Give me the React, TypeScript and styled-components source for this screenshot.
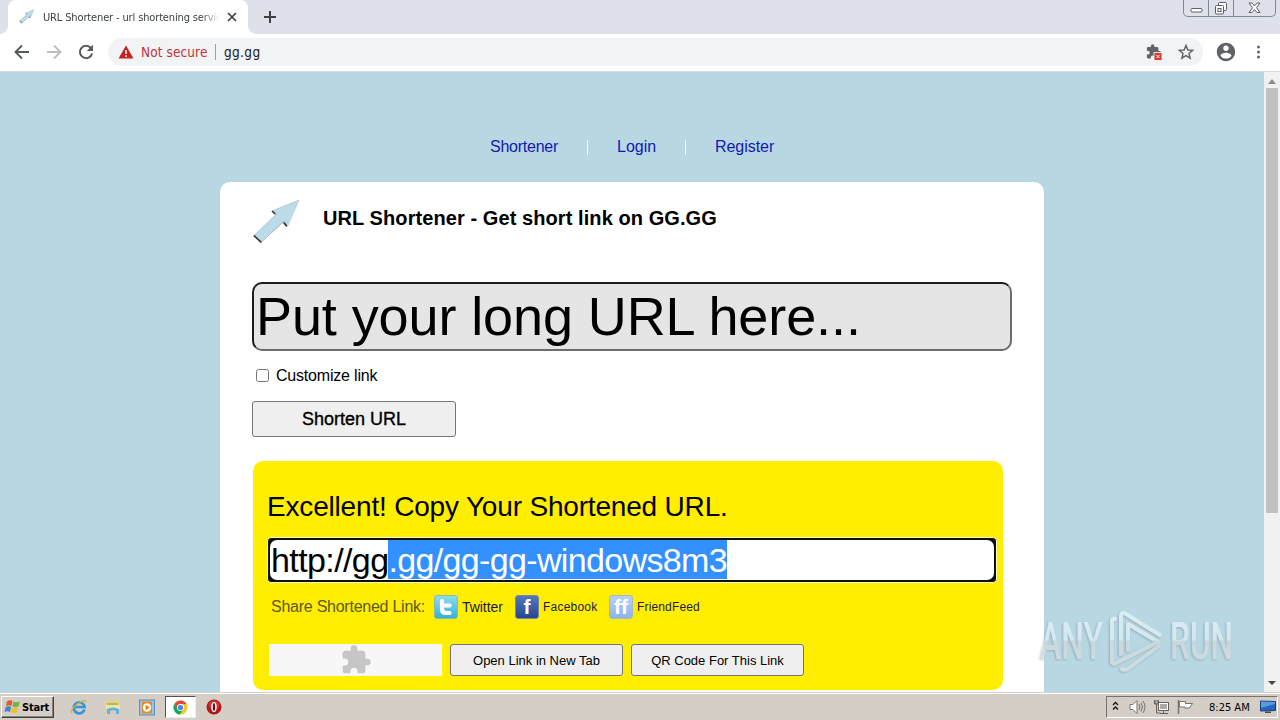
import React from "react";
import styled, { createGlobalStyle } from "styled-components";

const ui = `"DejaVu Sans Condensed", "DejaVu Sans", sans-serif`;

const GlobalStyle = createGlobalStyle`
  * { box-sizing: border-box; }
  body { margin: 0; overflow: hidden; font-family: "Liberation Sans", Arial, sans-serif; color: #000; }
  svg { display: block; flex: none; }
`;

const Screen = styled.div`
  position: relative;
  width: 1280px;
  height: 720px;
  display: flex;
  flex-direction: column;
  overflow: hidden;
  background: #b7d7e3;
`;

const Label = styled.span<{ $size: number; $track?: number; $weight?: number; $color?: string; $ui?: boolean }>`
  font-size: ${(p) => p.$size}px;
  letter-spacing: ${(p) => p.$track ?? 0}px;
  font-weight: ${(p) => p.$weight ?? 400};
  color: ${(p) => p.$color ?? "#000"};
  white-space: nowrap;
  ${(p) => (p.$ui ? `font-family: ${ui};` : "")}
`;

/* Browser chrome */
const TabStrip = styled.header`
  height: 34px;
  display: flex;
  align-items: flex-start;
  background: #dee1e9;
  padding-left: 8px;
  flex: none;
`;
const Tab = styled.div`
  position: relative;
  width: 240px;
  height: 34px;
  padding: 0 9px 0 11px;
  display: flex;
  align-items: center;
  background: #fff;
  border-radius: 8px 8px 0 0;
  &::before, &::after {
    content: "";
    position: absolute;
    bottom: 0;
    width: 8px;
    height: 8px;
  }
  &::before { left: -8px; background: radial-gradient(circle at 0 0, transparent 7.5px, #fff 8px); }
  &::after { right: -8px; background: radial-gradient(circle at 100% 0, transparent 7.5px, #fff 8px); }
`;
const TabTitle = styled.div`
  width: 177px;
  margin-left: 8px;
  margin-right: 6px;
  overflow: hidden;
  line-height: 16px;
  padding-top: 1px;
  display: flex;
  mask-image: linear-gradient(90deg, #000 158px, transparent 177px);
`;
const NewTab = styled.div`
  margin: 11px 0 0 16px;
`;
const WindowButtons = styled.div`
  margin-left: auto;
  margin-right: 4px;
  height: 17px;
  display: flex;
  border: 1px solid #84888f;
  border-top: 0;
  border-radius: 0 0 5px 5px;
`;
const WindowButton = styled.div<{ $w: number }>`
  width: ${(p) => p.$w}px;
  display: flex;
  align-items: center;
  justify-content: center;
  & + & { border-left: 1px solid #84888f; }
`;
const Toolbar = styled.div`
  height: 38px;
  flex: none;
  display: flex;
  align-items: center;
  background: #fff;
  border-bottom: 1px solid #d5dade;
  padding: 0 12px 1px;
  gap: 12px;
`;
const NavIcons = styled.div`
  display: flex;
  gap: 12px;
  width: 84px;
`;
const AddressBar = styled.div`
  width: 1095px;
  height: 28px;
  border-radius: 14px;
  background: #f1f3f4;
  display: flex;
  align-items: center;
  padding: 0 8px 0 10px;
`;
const Security = styled.div`
  width: 97px;
  display: flex;
  align-items: center;
  gap: 7px;
`;
const AddressDivider = styled.i`
  width: 1px;
  height: 16px;
  margin-right: 8px;
  background: #9aa0a6;
`;
const AddressActions = styled.div`
  margin-left: auto;
  display: flex;
  align-items: center;
  gap: 14px;
`;
const ProfileActions = styled.div`
  display: flex;
  align-items: center;
  gap: 14px;
`;

/* Page */
const Viewport = styled.main`
  height: 620px;
  flex: none;
  display: flex;
  overflow: hidden;
`;
const Page = styled.div`
  width: 1264px;
  height: 620px;
  overflow: hidden;
`;
const Menu = styled.nav`
  height: 110px;
  padding: 65px 0 0 490px;
  display: flex;
  align-items: flex-start;
  line-height: 20px;
`;
const MenuLink = styled.a<{ $w: number; $track: number }>`
  width: ${(p) => p.$w}px;
  color: #1418b4;
  font-size: 16px;
  letter-spacing: ${(p) => p.$track}px;
`;
const MenuDivider = styled.i`
  width: 1px;
  height: 15px;
  margin: 3px 29px 0 29px;
  background: #f2fafc;
`;
const Card = styled.section`
  width: 824px;
  height: 560px;
  margin-left: 220px;
  padding: 0 32px;
  border-radius: 10px 10px 0 0;
  background: #fff;
`;
const CardHeader = styled.div`
  height: 100px;
  padding-top: 16px;
  display: flex;
`;
const CardTitle = styled.h1`
  margin: 8px 0 0 21px;
  font-size: 20px;
  line-height: 24px;
  letter-spacing: 0.08px;
  white-space: nowrap;
`;
const LongUrl = styled.div`
  width: 760px;
  height: 69px;
  border: 2px solid;
  border-color: #1c1c1c #6d6d6d #6d6d6d #1c1c1c;
  border-radius: 10px;
  background: #e5e5e5;
  padding: 0 0 2px 2px;
  display: flex;
  align-items: center;
`;
const CheckRow = styled.label`
  height: 50px;
  padding: 0 0 0 4px;
  display: flex;
  align-items: center;
  gap: 7px;
`;
const Box = styled.i`
  width: 13px;
  height: 13px;
  margin-bottom: 2px;
  border: 1px solid #767676;
  border-radius: 2.5px;
  background: #fff;
`;
const Button = styled.button<{ $w: number; $h: number }>`
  width: ${(p) => p.$w}px;
  height: ${(p) => p.$h}px;
  border: 1px solid #767676;
  border-radius: 3px;
  background: #efefef;
  padding: 0;
  display: flex;
  align-items: center;
  justify-content: center;
  font-family: inherit;
`;
const SubmitText = styled(Label)`
  -webkit-text-stroke: 0.35px #000;
`;
const Result = styled.div`
  width: 750px;
  height: 229px;
  margin: 24px 0 0 1px;
  padding: 29px 0 0 14px;
  border-radius: 10px;
  background: #ffee00;
`;
const ResultTitle = styled.div`
  height: 47px;
  line-height: 33px;
`;
const ShortUrl = styled.div`
  width: 730px;
  height: 46px;
  border: 1px solid #f8f8c6;
  border-radius: 4px;
  background: #101010;
  padding: 2px;
`;
const ShortUrlField = styled.div`
  height: 100%;
  border-radius: 7px;
  background: #fff;
  padding-left: 1px;
  line-height: 40px;
  display: flex;
`;
const Selected = styled.span`
  height: 39px;
  background: #3390ff;
  line-height: 40px;
`;
const ShareRow = styled.div`
  height: 24px;
  margin: 12px 0 25px;
  padding-left: 4px;
  display: flex;
  align-items: center;
`;
const ShareLink = styled.span<{ $w: number }>`
  width: ${(p) => p.$w}px;
  display: flex;
  align-items: center;
  gap: 4px;
`;
const Badge = styled.i<{ $from: string; $to: string; $edge: string }>`
  width: 24px;
  height: 24px;
  flex: none;
  border: 1px solid ${(p) => p.$edge};
  border-radius: 3px;
  background: linear-gradient(${(p) => p.$from}, ${(p) => p.$to});
  display: flex;
  align-items: center;
  justify-content: center;
  color: #fff;
  font: bold 21px/22px "Liberation Sans", sans-serif;
`;
const Actions = styled.div`
  display: flex;
  gap: 8px;
  padding-left: 2px;
`;
const Plugin = styled.div`
  width: 173px;
  height: 32px;
  background: #f7f7f7;
  display: flex;
  justify-content: center;
`;
const ScrollTrack = styled.div`
  width: 16px;
  height: 620px;
  background: #f1f1f1;
  display: flex;
  flex-direction: column;
  align-items: center;
  padding: 7px 0;
  justify-content: space-between;
`;
const Thumb = styled.div`
  width: 12px;
  height: 425px;
  margin: 4px 0 auto;
  background: #c1c1c1;
`;
const Triangle = styled.i<{ $down?: boolean }>`
  border: 4px solid transparent;
  ${(p) => (p.$down ? "border-top: 4px solid #444; border-bottom: 0;" : "border-bottom: 5px solid #8d8d8d; border-top: 0;")}
`;

/* Taskbar */
const Taskbar = styled.footer`
  height: 28px;
  flex: none;
  display: flex;
  align-items: center;
  background: #d5cec6;
  border-top: 1px solid #d5d0c8;
  box-shadow: inset 0 1px #fff;
  padding: 1px 2px 0 1px;
`;
const Start = styled.div`
  width: 53px;
  height: 22px;
  padding-left: 2px;
  display: flex;
  align-items: center;
  gap: 1px;
  border: 1px solid;
  border-color: #fff #404040 #404040 #fff;
  box-shadow: inset -1px -1px #88847c;
`;
const Launchers = styled.div`
  display: flex;
  align-items: center;
  margin-left: 8px;
`;
const Launcher = styled.div<{ $active?: boolean }>`
  width: 34px;
  height: 22px;
  display: flex;
  align-items: center;
  justify-content: center;
  ${(p) =>
    p.$active
      ? `width: 31px; margin: 0 1px 0 1px; background: #fff; border: 1px solid; border-color: #55524c #eee #eee #55524c;`
      : ""}
`;
const Tray = styled.div`
  width: 172px;
  height: 22px;
  margin-left: auto;
  padding-left: 5px;
  display: flex;
  align-items: center;
  border: 1px solid;
  border-color: #77736c #fff #fff #77736c;
`;
const TraySlot = styled.div<{ $w: number }>`
  width: ${(p) => p.$w}px;
  display: flex;
`;

const Watermark = styled.svg`
  position: absolute;
  left: 1030px;
  top: 600px;
`;

const PUZZLE =
  "M20.5 11H19V7c0-1.100-.900-2-2-2h-4V3.500a2.500 2.500 0 0 0-5 0V5H4c-1.100 0-2 .900-2 2v3.800h1.500a2.700 2.700 0 0 1 0 5.400H2V20c0 1.100.900 2 2 2h3.800v-1.500a2.700 2.700 0 0 1 5.400 0V22H17c1.100 0 2-.900 2-2v-4h1.500a2.500 2.500 0 0 0 0-5z";

const ArrowLogo = ({ size }: { size: number }) => (
  <svg width={size} height={size} viewBox="0 0 50 50">
    <path d="M46.500 2.500 L20 13 L23.500 17 L1.500 38 L9 44.800 L30.500 25 L34.500 28.500 Z" fill="#3f484c" opacity=".6" />
    <path d="M47 2 L21 12.500 L24.500 16 L2.500 37 L10 43.500 L32 23 L36 27.500 Z" fill="#bcdbe8" stroke="#b0c4cc" strokeWidth=".6" />
    <path d="M1.800 37.500 L9.300 44.500 M20 13 L23 16 M32 25 L35 28.500" stroke="#343a3e" strokeWidth="1.600" />
  </svg>
);

const Chrome = () => (
  <svg width="15" height="15" viewBox="0 0 16 16">
    <circle cx="8" cy="8" r="7.500" fill="#f8c81c" />
    <path d="M1.500 4.250 A7.500 7.500 0 0 1 14.500 4.250 L8 4.500 L5 10 Z" fill="#dd4b39" />
    <path d="M1.500 4.250 L5 10 L8 11.400 L10.500 10.500 L7.500 15.500 A7.500 7.500 0 0 1 1.500 4.250" fill="#1da362" />
    <circle cx="8" cy="8" r="3.700" fill="#fff" />
    <circle cx="8" cy="8" r="2.800" fill="#4285f4" />
  </svg>
);

export default function App() {
  return (
    <Screen>
      <GlobalStyle />
      <TabStrip>
        <Tab>
          <ArrowLogo size={16} />
          <TabTitle>
            <Label $ui $size={11} $color="#3c4043" $track={-0.14}>URL Shortener - url shortening servic</Label>
          </TabTitle>
          <svg width="12" height="12" viewBox="0 0 12 12"><path d="M2 2l8 8M10 2l-8 8" stroke="#3c4043" strokeWidth="1.700" /></svg>
        </Tab>
        <NewTab>
          <svg width="12" height="12" viewBox="0 0 12 12"><path d="M6 0v12M0 6h12" stroke="#3c4043" strokeWidth="2" /></svg>
        </NewTab>
        <WindowButtons>
          <WindowButton $w={24}>
            <svg width="13" height="17" viewBox="0 0 13 17"><rect x="1" y="8.500" width="11" height="3.500" rx="1" fill="#fff" stroke="#5b6068" /></svg>
          </WindowButton>
          <WindowButton $w={25}>
            <svg width="14" height="17" viewBox="0 0 14 17" fill="#f7f8fa" stroke="#5b6068"><rect x="4.500" y="2.500" width="8" height="8" rx="1" /><rect x="1.500" y="5.500" width="8" height="8.500" rx="1" /><rect x="4" y="8.500" width="3" height="3" /></svg>
          </WindowButton>
          <WindowButton $w={42}>
            <svg width="13" height="17" viewBox="0 0 13 17"><path d="M1 3h3l2.500 3L9 3h3L8.500 7.750 12 12.500H9l-2.500-3-2.500 3H1l3.500-4.750z" fill="#fff" stroke="#5b6068" /></svg>
          </WindowButton>
        </WindowButtons>
      </TabStrip>

      <Toolbar>
        <NavIcons>
          <svg width="20" height="20" viewBox="0 0 20 20"><path d="M17 10H4M10 3.500L3.500 10l6.500 6.500" fill="none" stroke="#56595d" strokeWidth="1.900" /></svg>
          <svg width="20" height="20" viewBox="0 0 20 20"><path d="M3 10h13M10 3.500l6.500 6.500-6.500 6.500" fill="none" stroke="#bcbec1" strokeWidth="1.900" /></svg>
          <svg width="20" height="20" viewBox="0 0 20 20"><path d="M14.900 6A6.200 6.200 0 1 0 16.100 11.500" fill="none" stroke="#56595d" strokeWidth="2" /><path d="M17 2.800V9h-6.200z" fill="#56595d" /></svg>
        </NavIcons>
        <AddressBar>
          <Security>
            <svg width="16" height="14" viewBox="0 0 16 14"><path d="M8 .5L15.500 13.500H.5z" fill="#c5221f" /><path d="M8 5v4M8 10.300v1.700" stroke="#fff" strokeWidth="1.500" /></svg>
            <Label $ui $size={13.5} $color="#c5303a" $track={0.1}>Not secure</Label>
          </Security>
          <AddressDivider />
          <Label $ui $size={13.5} $color="#202124" $track={0.35}>gg.gg</Label>
          <AddressActions>
            <svg width="18" height="18" viewBox="0 0 18 18"><g transform="translate(.5 .5) scale(.68)"><path d={PUZZLE} fill="#5f6368" /></g><rect x="9" y="9.500" width="8" height="8" fill="#d9372e" stroke="#fff" strokeWidth=".8" /><path d="M11.300 11.800l3.400 3.400M14.700 11.800l-3.400 3.400" stroke="#fff" /></svg>
            <svg width="18" height="18" viewBox="0 0 24 24"><path d="M12 3.300l2.500 6 6.400.5-4.900 4.200 1.500 6.300-5.500-3.400-5.500 3.400L8 14 3.100 9.800l6.400-.5z" fill="none" stroke="#5f6368" strokeWidth="1.900" /></svg>
          </AddressActions>
        </AddressBar>
        <ProfileActions>
          <svg width="22" height="22" viewBox="0 0 24 24"><path fill="#5f6368" d="M12 2C6.480 2 2 6.480 2 12s4.480 10 10 10 10-4.480 10-10S17.520 2 12 2zm0 3c1.660 0 3 1.340 3 3s-1.340 3-3 3-3-1.340-3-3 1.340-3 3-3zm0 14.200c-2.500 0-4.710-1.280-6-3.220.03-1.990 4-3.080 6-3.080s5.970 1.090 6 3.080c-1.290 1.940-3.500 3.220-6 3.220z" /></svg>
          <svg width="16" height="16" viewBox="0 0 16 16" fill="#5f6368"><circle cx="7.500" cy="3" r="1.500" /><circle cx="7.500" cy="8" r="1.500" /><circle cx="7.500" cy="13" r="1.500" /></svg>
        </ProfileActions>
      </Toolbar>

      <Viewport>
        <Page>
          <Menu>
            <MenuLink $w={68} $track={-0.25}>Shortener</MenuLink>
            <MenuDivider />
            <MenuLink $w={39} $track={0}>Login</MenuLink>
            <MenuDivider />
            <MenuLink $w={60} $track={-0.05}>Register</MenuLink>
          </Menu>
          <Card>
            <CardHeader>
              <ArrowLogo size={50} />
              <CardTitle>URL Shortener - Get short link on GG.GG</CardTitle>
            </CardHeader>
            <LongUrl><Label $size={54} $track={-0.1}>Put your long URL here...</Label></LongUrl>
            <CheckRow>
              <Box />
              <Label $size={16} $track={-0.2}>Customize link</Label>
            </CheckRow>
            <Button $w={204} $h={36}><SubmitText $size={18}>Shorten URL</SubmitText></Button>
            <Result>
              <ResultTitle><Label $size={28} $track={-0.18}>Excellent! Copy Your Shortened URL.</Label></ResultTitle>
              <ShortUrl>
                <ShortUrlField>
                  <Label $size={34} $track={-0.6}>http://gg</Label>
                  <Selected><Label $size={34} $color="#fff" $track={-0.65}>.gg/gg-gg-windows8m3</Label></Selected>
                </ShortUrlField>
              </ShortUrl>
              <ShareRow>
                <ShareLink $w={163}><Label $size={16} $color="#5e5820" $track={-0.25}>Share Shortened Link:</Label></ShareLink>
                <ShareLink $w={81}>
                  <Badge $from="#8fdcea" $to="#36b2d4" $edge="#8db9a8">
                    <svg width="18" height="18" viewBox="0 0 18 18" fill="none" stroke="#fff" strokeWidth="4.200" strokeLinecap="round" strokeLinejoin="round"><path d="M5 3V11Q5 15 9 15H12.500M5 7.500H12.500" /></svg>
                  </Badge>
                  <Label $size={14} $color="#231b3c" $track={-0.05}>Twitter</Label>
                </ShareLink>
                <ShareLink $w={94}><Badge $from="#5278bb" $to="#27478f" $edge="#7888a0">f</Badge><Label $size={12} $color="#231b3c" $track={0.22}>Facebook</Label></ShareLink>
                <ShareLink $w={95}><Badge $from="#b8d1f4" $to="#8fb3e8" $edge="#a1bbca">ff</Badge><Label $size={12} $color="#231b3c" $track={0.15}>FriendFeed</Label></ShareLink>
              </ShareRow>
              <Actions>
                <Plugin><svg width="32" height="32" viewBox="0 0 24 24"><path d={PUZZLE} fill="#c6c6c6" /></svg></Plugin>
                <Button $w={173} $h={32}><Label $size={13}>Open Link in New Tab</Label></Button>
                <Button $w={173} $h={32}><Label $size={13}>QR Code For This Link</Label></Button>
              </Actions>
            </Result>
          </Card>
        </Page>
        <ScrollTrack>
          <Triangle />
          <Thumb />
          <Triangle $down />
        </ScrollTrack>
      </Viewport>

      <Taskbar>
        <Start>
          <svg width="17" height="16" viewBox="0 0 17 16"><path d="M3 2.500Q6 .500 8.500 2L7.500 7Q5 5.500 2 7z" fill="#e9542a" /><path d="M9.500 2.500Q12.500 4 16 2.500L14.500 7.500Q11.500 9 8.500 7.500z" fill="#74b43a" /><path d="M1.700 8Q4.500 6.500 7.200 8L6 13Q3.500 11.500 .500 13z" fill="#3c85d0" /><path d="M8.200 8.500Q11 10 14.200 8.500L13 13.500Q10 15 7 13.500z" fill="#f5bd26" /></svg>
          <Label $ui $size={11} $weight={700} $track={-0.2}>Start</Label>
        </Start>
        <Launchers>
          <Launcher>
            <svg width="18" height="18" viewBox="0 0 18 18" fill="none"><path d="M14.500 11.500A5.500 5.500 0 1 1 14.700 9H4.500" stroke="#3299dc" strokeWidth="2.700" /><path d="M2 15.500C-1 11 13 0 16.500 3.300" stroke="#dcae36" strokeWidth="1.300" /></svg>
          </Launcher>
          <Launcher>
            <svg width="18" height="18" viewBox="0 0 18 18"><path d="M2 4l5-2 2 1h6v9H2z" fill="#efd06a" /><path d="M3 5h11v2H3z" fill="#8cc77f" /><path d="M2 7h14v4H2z" fill="#f8e6a0" /><path d="M3 16V11q6-3 12 0v5h-3v-3q-3-1.500-6 0v3z" fill="#66b1dc" /></svg>
          </Launcher>
          <Launcher>
            <svg width="16" height="17" viewBox="0 0 16 17"><rect x=".5" y="1" width="15" height="15" fill="#8ec4ee" stroke="#5d8fbd" /><rect x="3" y="2.500" width="10" height="12" fill="#f18a1d" /><circle cx="8" cy="8.500" r="4.200" fill="#fff" /><path d="M6.600 5.700v5.600l4.300-2.800z" fill="#ee7d11" /></svg>
          </Launcher>
          <Launcher $active><Chrome /></Launcher>
          <Launcher>
            <svg width="16" height="16" viewBox="0 0 16 16"><circle cx="8" cy="8" r="7.500" fill="#b5161b" /><ellipse cx="8" cy="6" rx="5.500" ry="4.500" fill="#d84a45" opacity=".6" /><ellipse cx="8" cy="8" rx="2.700" ry="5" fill="#fff" /><ellipse cx="8" cy="8" rx="1.200" ry="4" fill="#7b0d11" /></svg>
          </Launcher>
        </Launchers>
        <Tray>
          <TraySlot $w={17}><svg width="8" height="12" viewBox="0 0 8 12" fill="none" stroke="#111" strokeWidth="1.300"><path d="M1 4l2.500-2.500L6 4M1 8.500L3.500 6 6 8.500" /></svg></TraySlot>
          <TraySlot $w={24}><svg width="17" height="16" viewBox="0 0 17 16" fill="none" stroke="#77736f"><path d="M1 5.500h3l4-4v13l-4-4H1z" fill="#fff" /><path d="M10 5q2 3 0 6M12 3.500q3 4.500 0 9M14 2q4 6 0 12" /></svg></TraySlot>
          <TraySlot $w={24}><svg width="17" height="16" viewBox="0 0 17 16" fill="none" stroke="#65625d"><rect x="5.500" y="3.500" width="10" height="8" fill="#fff" /><rect x="7" y="5" width="7" height="5" fill="#aaa8a4" stroke="none" /><path d="M1.500 1v4h4V1M3.500 5v9h4M7 14.500h8M10.500 12v2" /><path d="M2 2h3v2H2z" fill="#fff" /></svg></TraySlot>
          <TraySlot $w={32}><svg width="17" height="16" viewBox="0 0 17 16" fill="none" stroke="#77736f"><path d="M1.500 1v14" strokeWidth="1.500" /><path d="M2.500 2.500h6v2h7l-3 4.500H8V8H2.500z" fill="#fff" /></svg></TraySlot>
          <TraySlot $w={51}><Label $ui $size={11} $track={0}>8:25 AM</Label></TraySlot>
          <svg width="16" height="14" viewBox="0 0 16 14"><path d="M.5 1l15 .5v9L.5 11z" fill="#2467bd" stroke="#173e7f" /><path d="M1 1.500l14 .5v2L1 8z" fill="#5a9be0" /><path d="M5 11.500h6v1.500H5z" fill="#444f5d" /></svg>
        </Tray>
      </Taskbar>

      <Watermark width="214" height="80" viewBox="0 0 214 80">
        <defs>
          <filter id="soft" x="-10%" y="-10%" width="120%" height="120%">
            <feDropShadow dx="-1" dy="1" stdDeviation="1.200" floodColor="#6b7f88" floodOpacity=".5" />
          </filter>
          <linearGradient id="silver" gradientUnits="userSpaceOnUse" x1="0" y1="10" x2="0" y2="70">
            <stop offset="0" stopColor="#e0f1f7" />
            <stop offset=".5" stopColor="#d8eaf1" />
            <stop offset=".52" stopColor="#ccd8dd" />
            <stop offset="1" stopColor="#d4dfe4" />
          </linearGradient>
        </defs>
        <g filter="url(#soft)" opacity=".88" fill="url(#silver)" fontFamily="Roboto, sans-serif" fontSize="51">
          <text x="10" y="59" textLength="63" lengthAdjust="spacingAndGlyphs" fontWeight="500">ANY</text>
          <text x="140" y="59" textLength="63" lengthAdjust="spacingAndGlyphs" fontWeight="500">RUN</text>
          <g fill="none" stroke="url(#silver)" strokeWidth="4" strokeLinejoin="round" strokeLinecap="round">
            <path d="M85 19Q82 17 82 22V61Q82 65 86 63L128 42L98 24V50" />
            <path d="M130 35L96 14Q91 11 91 17V54M92 69Q95 71 99 68L129 46" />
          </g>
        </g>
      </Watermark>
    </Screen>
  );
}
